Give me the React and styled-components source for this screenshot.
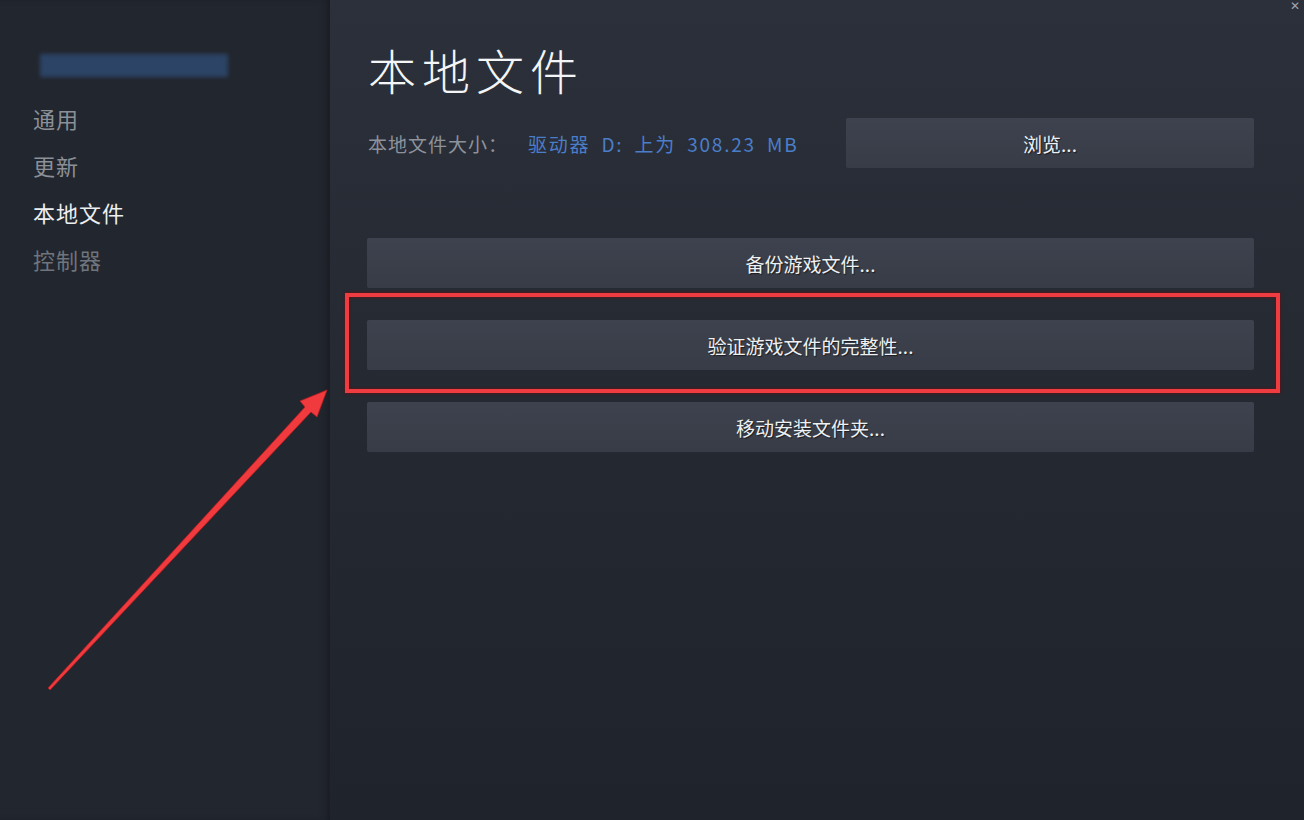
import React from 'react';
import styled, { createGlobalStyle } from 'styled-components';

const GlobalStyle = createGlobalStyle`
  html, body {
    margin: 0;
    padding: 0;
    background: #22262e;
  }
  body {
    font-family: 'Noto Sans CJK SC', 'Noto Sans', sans-serif;
  }
`;

const Page = styled.div`
  position: relative;
  display: flex;
  width: 1304px;
  height: 820px;
  overflow: hidden;
`;

const Sidebar = styled.nav`
  width: 330px;
  flex-shrink: 0;
  box-sizing: border-box;
  padding: 54px 0 0 33px;
  background: #22262e;
  box-shadow: inset -6px 0 8px -4px rgba(10, 12, 16, 0.45);
`;

const AccountBar = styled.div`
  width: 188px;
  height: 23px;
  margin: 0 0 25px 7px;
  background: #2c4466;
  filter: blur(2px);
`;

const NavList = styled.ul`
  list-style: none;
  margin: 0;
  padding: 0;
  display: flex;
  flex-direction: column;
  gap: 15px;
`;

const NavItem = styled.li`
  font-size: 22px;
  line-height: 32px;
  letter-spacing: 1px;
  color: ${p => (p.active ? '#eceef0' : p.dim ? '#6f747d' : '#8b9098')};
`;

const Main = styled.main`
  flex: 1;
  box-sizing: border-box;
  padding: 38px 50px 0 38px;
  background: linear-gradient(180deg, #2c303a 0%, #262a33 40%, #1f232b 100%);
`;

const Title = styled.h1`
  margin: 0 0 18px;
  font-size: 48px;
  line-height: 62px;
  font-weight: 300;
  letter-spacing: 6px;
  color: #f4f5f6;
`;

const SizeRow = styled.div`
  display: flex;
  align-items: center;
  padding-bottom: 70px;
`;

const SizeLabel = styled.span`
  font-size: 19px;
  letter-spacing: 1px;
  color: #8d929b;
  margin-right: 20px;
`;

const DriveText = styled.span`
  font-size: 19px;
  letter-spacing: 1.8px;
  word-spacing: 5px;
  color: #4a7ec9;
`;

const Button = styled.button`
  display: flex;
  align-items: center;
  justify-content: center;
  width: ${p => p.width || '100%'};
  height: 50px;
  margin-left: ${p => (p.push ? 'auto' : '0')};
  border: none;
  border-radius: 2px;
  background: linear-gradient(180deg, #3d424e 0%, #373c47 100%);
  color: #eef0f2;
  font-family: 'Noto Sans CJK SC', 'Noto Sans', sans-serif;
  font-size: 19px;
  text-shadow: 1px 1px 1px rgba(0, 0, 0, 0.55);
  cursor: pointer;
`;

const ActionList = styled.div`
  display: flex;
  flex-direction: column;
  gap: 32px;
  margin-left: -1px;
`;

const Highlighted = styled.div`
  position: relative;
`;

const HighlightBox = styled.div`
  position: absolute;
  left: -22px;
  right: -26px;
  top: -27px;
  bottom: -23px;
  border: 4px solid #ee3c40;
  box-shadow: 0 0 3px rgba(120, 10, 10, 0.9), inset 0 0 3px rgba(120, 10, 10, 0.9);
  pointer-events: none;
`;

const Close = styled.div`
  position: absolute;
  top: 0;
  right: 4px;
  color: #9ea4b0;
  font-family: 'DejaVu Sans', sans-serif;
  font-size: 12px;
  line-height: 12px;
`;

const ArrowLayer = styled.svg`
  position: absolute;
  left: 0;
  top: 0;
  pointer-events: none;
`;

const Arrow = () => (
  <ArrowLayer width="1304" height="820" viewBox="0 0 1304 820">
    <path
      d="M48 688 L305 407 L300 401 L327 390 L317 417 L311 412 L50 690 Z"
      fill="#f03a3e"
      stroke="#b21e22"
      strokeWidth="0.8"
      strokeLinejoin="round"
    />
  </ArrowLayer>
);

export default function App() {
  return (
    <>
      <GlobalStyle />
      <Page>
        <Sidebar>
          <AccountBar />
          <NavList>
            <NavItem>通用</NavItem>
            <NavItem>更新</NavItem>
            <NavItem active>本地文件</NavItem>
            <NavItem dim>控制器</NavItem>
          </NavList>
        </Sidebar>
        <Main>
          <Title>本地文件</Title>
          <SizeRow>
            <SizeLabel>本地文件大小：</SizeLabel>
            <DriveText>驱动器 D: 上为 308.23 MB</DriveText>
            <Button push width="408px">浏览...</Button>
          </SizeRow>
          <ActionList>
            <Button>备份游戏文件...</Button>
            <Highlighted>
              <Button>验证游戏文件的完整性...</Button>
              <HighlightBox />
            </Highlighted>
            <Button>移动安装文件夹...</Button>
          </ActionList>
        </Main>
        <Close>✕</Close>
        <Arrow />
      </Page>
    </>
  );
}
